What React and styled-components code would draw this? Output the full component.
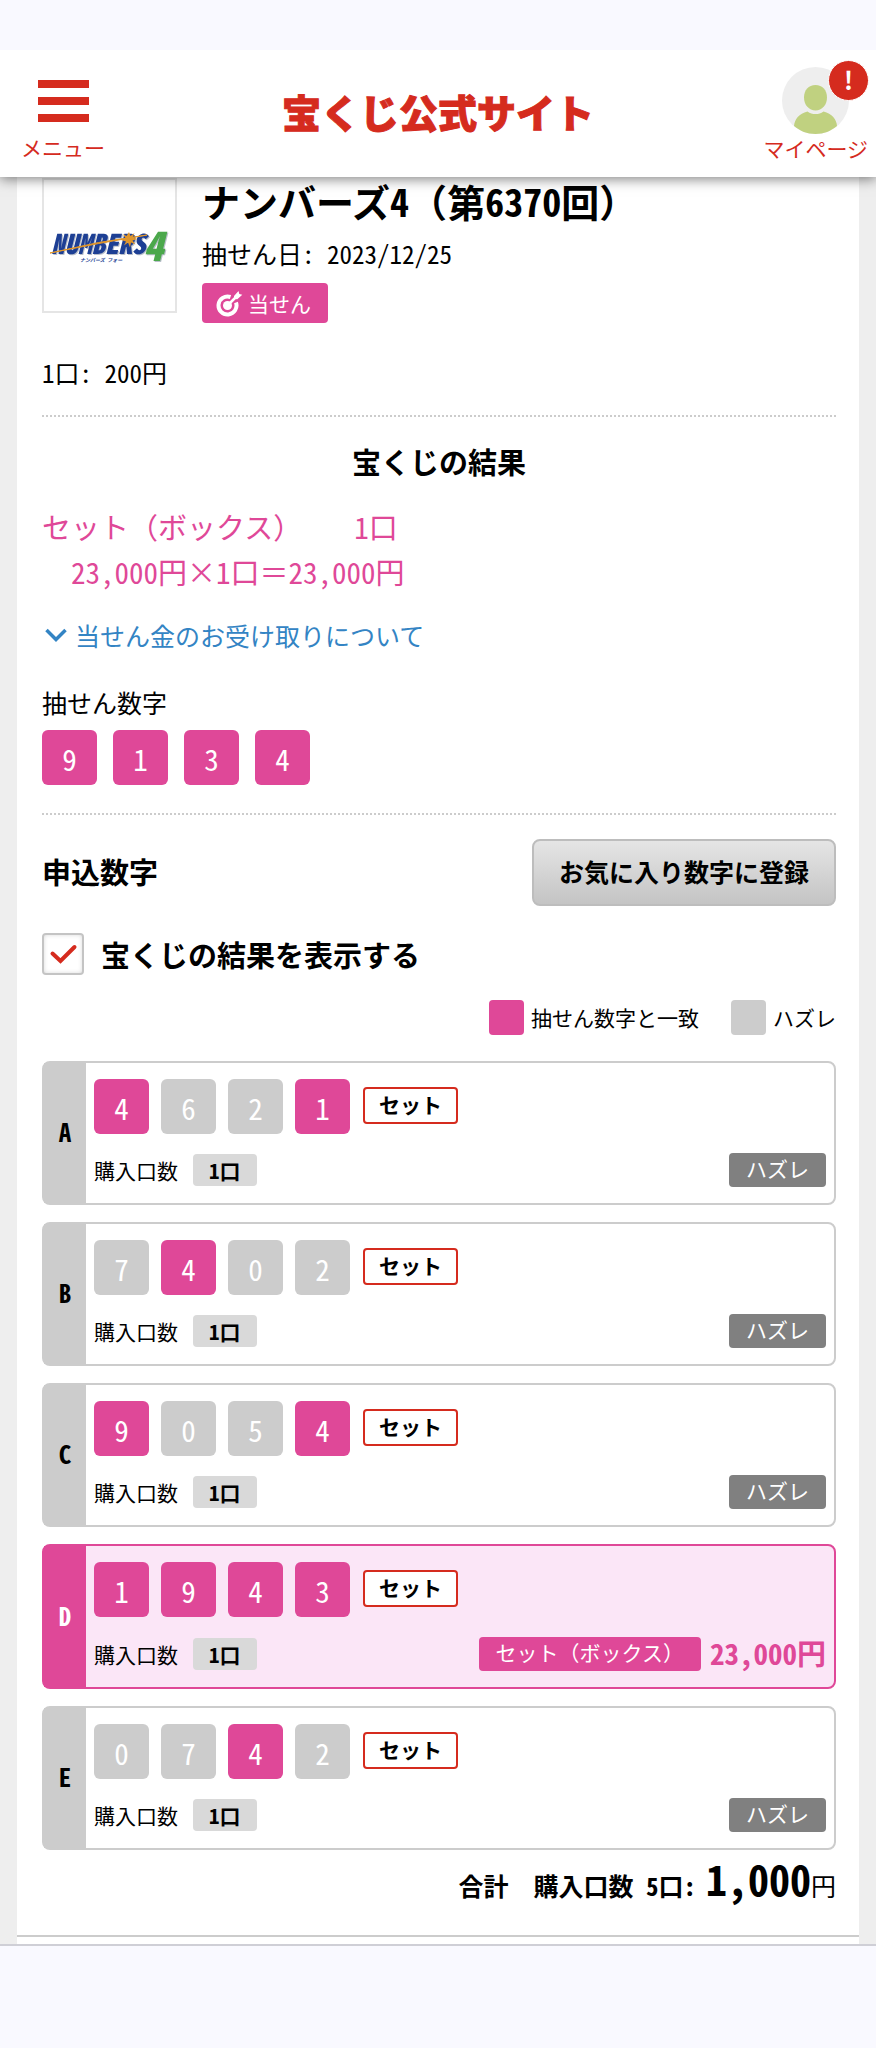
import React, { useState } from "react";
import styled, { createGlobalStyle, ThemeProvider } from "styled-components";

const theme = {
  red: "#d52b1e",
  pink: "#df4898",
  palePink: "#fbe6f7",
  gray: "#cccccc",
  link: "#3384c4",
  chrome: "#f9f9ff",
};

const GlobalStyle = createGlobalStyle`
  * {
    box-sizing: border-box;
  }
  body {
    margin: 0;
    color: #000;
    background-color: ${theme.chrome};
    font-family: "Noto Sans CJK JP", sans-serif;
    font-size: 25px;
    line-height: 36px;
    font-feature-settings: "hwid";
    text-spacing-trim: space-all;
  }
  h1, h2, h3, p, ul {
    margin: 0;
    padding: 0;
  }
  button {
    font-family: inherit;
    font-feature-settings: inherit;
    cursor: pointer;
  }
`;

const Screen = styled.div`
  padding: 50px 0 98px;
`;

const Head = styled.header`
  position: relative;
  display: grid;
  grid-template-columns: 1fr auto 1fr;
  align-items: center;
  height: 127px;
  padding: 0 8px;
  background-color: #fff;
  box-shadow: 0 2px 12px rgba(0, 0, 0, 0.5);
  clip-path: inset(0 0 -20px 0);
`;

const Menu = styled.button`
  justify-self: start;
  display: flex;
  flex-direction: column;
  align-items: center;
  gap: 11px;
  margin: 14px 0 0 13px;
  padding: 0;
  border: 0;
  background: none;
  color: ${({ theme }) => theme.red};
  font-size: 21px;
  line-height: 28px;
`;

const Bars = styled.span`
  width: 51px;
  height: 42px;
  border: solid ${({ theme }) => theme.red};
  border-width: 8px 0;
  display: flex;
  align-items: center;
  &:before {
    content: "";
    width: 100%;
    height: 8px;
    background-color: ${({ theme }) => theme.red};
  }
`;

const SiteName = styled.a`
  margin-bottom: 5px;
  color: ${({ theme }) => theme.red};
  font-size: 39px;
  font-weight: 900;
  line-height: 56px;
  text-decoration: none;
  -webkit-text-stroke: 1px ${({ theme }) => theme.red};
`;

const MyPage = styled.a`
  justify-self: end;
  position: relative;
  display: flex;
  flex-direction: column;
  align-items: center;
  margin-top: 1px;
  color: ${({ theme }) => theme.red};
  font-size: 21px;
  line-height: 28px;
  text-decoration: none;
`;

const Alert = styled.span`
  position: absolute;
  top: -7px;
  right: -1px;
  width: 41px;
  height: 41px;
  border: 1px solid #fff;
  border-radius: 50%;
  background-color: ${({ theme }) => theme.red};
  color: #fff;
  font-size: 25px;
  font-weight: bold;
  line-height: 36px;
  text-align: center;
`;

const Body = styled.div`
  padding: 0 17px;
  border-bottom: 2px solid #cfcfd6;
  background-color: #eee;
`;

const Sheet = styled.main`
  padding-bottom: 7px;
  background-color: #fff;
`;

const Ticket = styled.div`
  padding: 1px 23px 22px 25px;
  border-bottom: 2px solid ${({ theme }) => theme.gray};
`;

// Brackets, signs and ideographic spaces that keep their full width
const Wide = styled.span`
  font-feature-settings: normal;
`;

const Summary = styled.section`
  display: flex;
  gap: 25px;
`;

const Thumb = styled.div`
  display: flex;
  justify-content: center;
  align-items: center;
  width: 135px;
  height: 135px;
  border: 2px solid #e5e5e5;
`;

const Title = styled.h1`
  font-size: 38px;
  line-height: 46px;
`;

const WinBadge = styled.p`
  display: flex;
  align-items: center;
  gap: 5px;
  width: fit-content;
  height: 40px;
  margin-top: 12px;
  padding: 0 17px 0 14px;
  border-radius: 4px;
  background-color: ${({ theme }) => theme.pink};
  color: #fff;
  font-size: 21px;
`;

const DrawDate = styled.p`
  margin-top: 11px;
`;

const Price = styled.p`
  margin-top: 31px;
`;

const Result = styled.section`
  margin-top: 25px;
  padding: 23px 0 28px;
  border: dotted ${({ theme }) => theme.gray};
  border-width: 2px 0;
`;

const Heading = styled.h2`
  font-size: 29px;
  line-height: 42px;
  text-align: ${({ $center }) => ($center ? "center" : "left")};
`;

const Prize = styled.p`
  margin-top: 22px;
  color: ${({ theme }) => theme.pink};
  font-size: 29px;
  line-height: 45px;
`;

const Units = styled.span`
  margin-left: 52px;
`;

const Calc = styled.span`
  display: block;
  padding-left: 29px;
`;

const Receive = styled.a`
  display: flex;
  align-items: center;
  gap: 8px;
  margin-top: 23px;
  padding-left: 3px;
  color: ${({ theme }) => theme.link};
  text-decoration: none;
`;

const Label = styled.h3`
  margin-top: 31px;
  font-size: 25px;
  font-weight: normal;
`;

const Tiles = styled.div`
  display: flex;
  gap: ${({ $gap }) => $gap}px;
`;

const DrawnTiles = styled(Tiles)`
  margin-top: 10px;
`;

const Tile = styled.span`
  width: 55px;
  height: 55px;
  border-radius: 6px;
  background-color: ${({ theme, $hit }) => ($hit ? theme.pink : theme.gray)};
  color: #fff;
  font-size: 29px;
  line-height: 56px;
  text-align: center;
`;

const EntryHead = styled.div`
  display: flex;
  justify-content: space-between;
  align-items: center;
  margin-top: 24px;
`;

const EntryTitle = styled(Heading)`
  padding-bottom: 4px;
`;

const Favorite = styled.button`
  height: 67px;
  padding: 0 25px 4px;
  border: 2px solid #bdbdbd;
  border-radius: 8px;
  background: linear-gradient(#e5e5e5, #c4c4c4);
  color: #000;
  font-size: 25px;
  font-weight: bold;
`;

const Toggle = styled.label`
  display: flex;
  align-items: center;
  gap: 17px;
  margin-top: 27px;
  font-size: 29px;
  font-weight: bold;
  line-height: 40px;
`;

const Check = styled.span`
  display: grid;
  width: 42px;
  height: 42px;
  border: 2px solid #c4c4c4;
  border-radius: 4px;
  box-shadow: inset 0 0 4px rgba(0, 0, 0, 0.15);
  & > * {
    grid-area: 1 / 1;
  }
  input {
    appearance: none;
    margin: 0;
  }
  svg {
    pointer-events: none;
    visibility: hidden;
  }
  input:checked + svg {
    visibility: visible;
  }
`;

const Legend = styled.ul`
  display: flex;
  justify-content: flex-end;
  gap: 32px;
  margin-top: 24px;
  font-size: 21px;
  list-style: none;
`;

const LegendItem = styled.li`
  display: flex;
  align-items: center;
  gap: 7px;
  &:before {
    content: "";
    width: 35px;
    height: 35px;
    border-radius: 4px;
    background-color: ${({ theme, $hit }) => ($hit ? theme.pink : theme.gray)};
  }
`;

const Entries = styled.div`
  display: flex;
  flex-direction: column;
  gap: 17px;
  margin-top: 26px;
`;

const Entry = styled.article`
  display: flex;
  border: 2px solid ${({ theme, $won }) => ($won ? theme.pink : theme.gray)};
  border-radius: 8px;
  background-color: ${({ theme, $won }) => ($won ? theme.palePink : "#fff")};
`;

const Side = styled.h3`
  display: flex;
  justify-content: center;
  align-items: center;
  width: 42px;
  padding-bottom: 4px;
  background-color: ${({ theme, $won }) => ($won ? theme.pink : theme.gray)};
  color: ${({ $won }) => ($won ? "#fff" : "#000")};
  font-size: 25px;
`;

const EntryBody = styled.div`
  flex: 1;
  padding: 16px 8px;
`;

const Line = styled.div`
  display: flex;
  align-items: center;
  gap: 13px;
`;

const CountLine = styled(Line)`
  gap: 15px;
  margin-top: 19px;
  font-size: 21px;
  line-height: 34px;
`;

const Kind = styled.span`
  height: 37px;
  margin-bottom: 2px;
  padding: 0 14px;
  border: 2px solid ${({ theme }) => theme.red};
  border-radius: 4px;
  background-color: #fff;
  font-size: 21px;
  font-weight: bold;
  line-height: 30px;
`;

const Count = styled.span`
  padding: 0 16px;
  border-radius: 4px;
  background-color: #d9d9d9;
  font-weight: bold;
  line-height: 32px;
`;

const Outcome = styled.span`
  margin-left: auto;
  padding: 0 17px 4px;
  border-radius: 4px;
  background-color: ${({ theme, $won }) => ($won ? theme.pink : "#808080")};
  color: #fff;
  line-height: 30px;
`;

const Amount = styled.strong`
  margin-left: -6px;
  padding-bottom: 3px;
  color: ${({ theme }) => theme.pink};
  font-size: 29px;
  line-height: 32px;
`;

const Total = styled.p`
  display: flex;
  justify-content: flex-end;
  align-items: baseline;
  line-height: 56px;
  white-space: pre;
`;

const TotalLabel = styled.strong`
  margin-right: 10px;
`;

const TotalPrice = styled.strong`
  font-size: 42px;
`;

const LogoType = styled.g`
  font-weight: 900;
  font-style: italic;
  filter: drop-shadow(1px 1px 0 #b9bfca);
`;

const entries = [
  { id: "A", digits: "4621", hits: [0, 3] },
  { id: "B", digits: "7402", hits: [1] },
  { id: "C", digits: "9054", hits: [0, 3] },
  { id: "D", digits: "1943", hits: [0, 1, 2, 3], prize: "23,000円" },
  { id: "E", digits: "0742", hits: [2] },
];

const Avatar = () => (
  <svg width="67" height="67" viewBox="0 0 67 67" aria-hidden="true">
    <circle cx="33.5" cy="33.5" r="33.5" fill="#eee" />
    <path
      d="M33.5 18c7 0 11.5 5 11.5 12.500S40 43.500 33.500 43.500 22 38 22 30.500 26.500 18 33.500 18z"
      fill="#c0d180"
    />
    <path
      d="M12 59c.5-7 5-12 13.500-14.500 2.500 2 5 2.500 8 2.500s5.500-.5 8-2.500C50 47 54.500 52 55 59c-6 5-13 8-21.500 8S18 64 12 59z"
      fill="#c0d180"
    />
  </svg>
);

const Target = () => (
  <svg width="27" height="27" viewBox="0 0 27 27" fill="none" aria-hidden="true">
    <path d="M14.5 7A9 9 0 1 0 20 12.5" stroke="#fff" strokeWidth="4" />
    <circle cx="11.5" cy="15.5" r="4.5" fill="#fff" />
    <path d="M12 15l9-9" stroke="#fff" strokeWidth="2.5" />
    <path d="M18 6l4.500-5 .8 3 3 .8-5 4.500-3.300-.2z" fill="#fff" />
  </svg>
);

const Numbers4 = () => (
  <svg width="122" height="38" viewBox="0 0 122 38" role="img" aria-label="NUMBERS4 ナンバーズ フォー">
    <LogoType>
      <text x="2" y="27" fontSize="27" fill="#1d3f94">NUMBERS</text>
      <text x="94" y="34" fontSize="40" fill="#4ba84b">4</text>
    </LogoType>
    <path d="M1 26Q50 14 98 8Q50 16 1 26z" stroke="#e0962b" strokeWidth="1" fill="#e0962b" />
    <path
      d="M80 5l1.500 4 4-3-2 4.500 5 1.500-5 1.500 3 4-4.500-2-1 5-2-5-4 3 2-4-5-1.500 4.500-2-3-4 4 2z"
      fill="#e0962b"
    />
    <text x="31" y="35" fontSize="5" fontWeight="bold" fontStyle="italic" fill="#1d3f94">
      ナンバーズ フォー
    </text>
  </svg>
);

const SetBox = () => (
  <>
    セット<Wide>（</Wide>ボックス<Wide>）</Wide>
  </>
);

const App = () => {
  const [showResult, setShowResult] = useState(true);

  return (
    <ThemeProvider theme={theme}>
      <GlobalStyle />
      <Screen>
        <Head>
          <Menu type="button">
            <Bars />
            メニュー
          </Menu>
          <SiteName href="#">宝くじ公式サイト</SiteName>
          <MyPage href="#">
            <Avatar />
            <Alert>!</Alert>
            マイページ
          </MyPage>
        </Head>
        <Body>
          <Sheet>
            <Ticket>
              <Summary>
                <Thumb>
                  <Numbers4 />
                </Thumb>
                <div>
                  <Title>
                    ナンバーズ4<Wide>（</Wide>第6370回<Wide>）</Wide>
                  </Title>
                  <DrawDate>抽せん日: 2023/12/25</DrawDate>
                  <WinBadge>
                    <Target />
                    当せん
                  </WinBadge>
                </div>
              </Summary>
              <Price>1口: 200円</Price>
              <Result>
                <Heading $center>宝くじの結果</Heading>
                <Prize>
                  <SetBox />
                  <Units>1口</Units>
                  <Calc>
                    23,000円×1口<Wide>＝</Wide>23,000円
                  </Calc>
                </Prize>
                <Receive href="#">
                  <svg width="22" height="14" viewBox="0 0 22 14" fill="none" aria-hidden="true">
                    <path d="M1.5 2L11 11.5 20.5 2" stroke="#3384c4" strokeWidth="3.5" />
                  </svg>
                  当せん金のお受け取りについて
                </Receive>
                <Label>抽せん数字</Label>
                <DrawnTiles $gap={16}>
                  {[..."9134"].map((n) => (
                    <Tile key={n} $hit>
                      {n}
                    </Tile>
                  ))}
                </DrawnTiles>
              </Result>
              <EntryHead>
                <EntryTitle>申込数字</EntryTitle>
                <Favorite type="button">お気に入り数字に登録</Favorite>
              </EntryHead>
              <Toggle>
                <Check>
                  <input
                    type="checkbox"
                    checked={showResult}
                    onChange={(e) => setShowResult(e.target.checked)}
                  />
                  <svg width="38" height="38" viewBox="0 0 38 38" fill="none" aria-hidden="true">
                    <path
                      d="M8.500 18.500l8 7.500L30.500 12"
                      stroke="#d52b1e"
                      strokeWidth="4"
                      strokeLinecap="round"
                    />
                  </svg>
                </Check>
                宝くじの結果を表示する
              </Toggle>
              <Legend>
                <LegendItem $hit>抽せん数字と一致</LegendItem>
                <LegendItem>ハズレ</LegendItem>
              </Legend>
              <Entries>
                {entries.map(({ id, digits, hits, prize }) => (
                  <Entry key={id} $won={showResult && prize}>
                    <Side $won={showResult && prize}>{id}</Side>
                    <EntryBody>
                      <Line>
                        <Tiles $gap={12}>
                          {[...digits].map((n, i) => (
                            <Tile key={i} $hit={showResult && hits.includes(i)}>
                              {n}
                            </Tile>
                          ))}
                        </Tiles>
                        <Kind>セット</Kind>
                      </Line>
                      <CountLine>
                        購入口数
                        <Count>1口</Count>
                        {showResult && (
                          <Outcome $won={prize}>{prize ? <SetBox /> : "ハズレ"}</Outcome>
                        )}
                        {showResult && prize && <Amount>{prize}</Amount>}
                      </CountLine>
                    </EntryBody>
                  </Entry>
                ))}
              </Entries>
              <Total>
                <TotalLabel>
                  合計<Wide>　</Wide>購入口数 5口:
                </TotalLabel>
                <TotalPrice>1,000</TotalPrice>円
              </Total>
            </Ticket>
          </Sheet>
        </Body>
      </Screen>
    </ThemeProvider>
  );
};

export default App;
